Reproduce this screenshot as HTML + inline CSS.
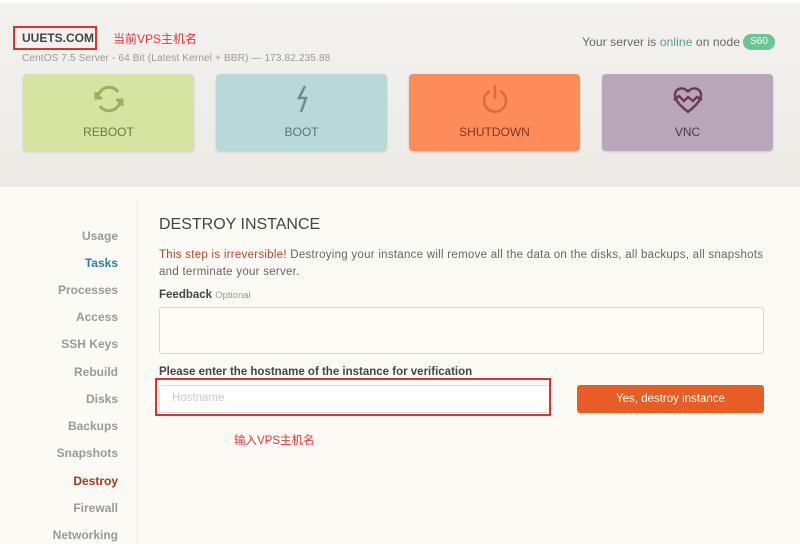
<!DOCTYPE html>
<html><head><meta charset="utf-8"><style>
*{margin:0;padding:0;box-sizing:border-box}
body{width:800px;height:544px;overflow:hidden;font-family:"Liberation Sans","Noto Sans CJK SC",sans-serif;background:#fcfaf4;position:relative;color:#555}
.hdr{position:absolute;left:0;top:0;width:800px;height:187px;background:linear-gradient(#f3f2ef,#eceae5);border-top:3px solid #fff}
.a{position:absolute;white-space:nowrap}
.btn{position:absolute;top:74px;width:171px;height:77px;border-radius:4px;box-shadow:0 1px 2px rgba(0,0,0,.15);text-align:center;font-size:12px}
.btn span{position:absolute;left:0;right:0;top:51px}
.btn svg{position:absolute;left:70px;top:9px}
.nav{position:absolute;right:682px;font-size:12px;color:#999;text-align:right;font-weight:bold}
</style></head><body>
<div class="hdr"></div>
<div class="a" style="left:13px;top:26px;width:84px;height:24px;border:2px solid #e03030"></div>
<div class="a" style="left:22px;top:31px;font-size:12px;font-weight:bold;color:#444">UUETS.COM</div>
<div class="a" style="left:113px;top:30px;font-size:12px;color:#e8383a">当前VPS主机名</div>
<div class="a" style="left:22px;top:53px;font-size:10px;color:#999;letter-spacing:0.15px">CentOS 7.5 Server - 64 Bit (Latest Kernel + BBR) — 173.82.235.88</div>
<div class="a" style="right:60px;top:35px;font-size:12px;color:#666;letter-spacing:0.1px">Your server is <span style="color:#4aa38a">online</span> on node</div>
<div class="a" style="left:743px;top:34px;width:32px;height:16px;border-radius:8px;background:#6cc396;color:#fff;font-size:10px;text-align:center;line-height:16px">S60</div>

<div class="btn" style="left:23px;background:#d5e4a0;color:#6b7a45"><svg width="32" height="32" viewBox="0 0 32 32" fill="none" stroke="#98b25a" stroke-width="3"><path d="M5 14a11 11 0 0 1 20-5"/><path d="M27 18a11 11 0 0 1-20 5"/><path d="M3 9v6h6M29 23v-6h-6"/></svg><span>REBOOT</span></div>
<div class="btn" style="left:216px;background:#b8d9d7;color:#5b7273"><svg width="32" height="32" viewBox="0 0 32 32" fill="none" stroke="#6d8c8c" stroke-width="2.5"><path d="M19 3l-6 12h7l-5 14"/></svg><span>BOOT</span></div>
<div class="btn" style="left:409px;background:#fe8c5a;color:#7a3a22"><svg width="32" height="32" viewBox="0 0 32 32" fill="none" stroke="#de6a3a" stroke-width="2.5"><path d="M11 8a11 11 0 1 0 10 0"/><path d="M16 2v14"/></svg><span>SHUTDOWN</span></div>
<div class="btn" style="left:602px;background:#b8a7b9;color:#4a3a4a"><svg width="32" height="32" viewBox="0 0 32 32" fill="none" stroke="#6a3b55" stroke-width="2.5"><path d="M16 9c-4-6-13-4-13 3 0 6 6 11 13 17 7-6 13-11 13-17 0-7-9-9-13-3"/><path d="M2 17l5-4 5 5 4-4 5 4 4-4 5 3"/></svg><span>VNC</span></div>

<div class="a" style="left:137px;top:200px;width:1px;height:344px;background:#efece4"></div>
<div class="nav" style="top:229px">Usage</div>
<div class="nav" style="top:256px;color:#2f7ea3">Tasks</div>
<div class="nav" style="top:283px">Processes</div>
<div class="nav" style="top:310px">Access</div>
<div class="nav" style="top:337px">SSH Keys</div>
<div class="nav" style="top:365px">Rebuild</div>
<div class="nav" style="top:392px">Disks</div>
<div class="nav" style="top:419px">Backups</div>
<div class="nav" style="top:446px">Snapshots</div>
<div class="nav" style="top:474px;color:#b0351c">Destroy</div>
<div class="nav" style="top:501px">Firewall</div>
<div class="nav" style="top:528px">Networking</div>

<div class="a" style="left:159px;top:216px;font-size:16px;color:#444">DESTROY INSTANCE</div>
<div class="a" style="left:159px;top:247px;font-size:11.5px;color:#666;line-height:17px;letter-spacing:0.27px"><span style="color:#b7472a">This step is irreversible!</span> Destroying your instance will remove all the data on the disks, all backups, all snapshots<br>and terminate your server.</div>
<div class="a" style="left:159px;top:289px;font-size:11.5px;font-weight:bold;color:#444">Feedback <span style="font-size:9.5px;color:#999;font-weight:normal">Optional</span></div>
<div class="a" style="left:159px;top:307px;width:605px;height:47px;border:1px solid #d8d6d0;border-radius:3px;background:#fdfbf5"></div>
<div class="a" style="left:159px;top:366px;font-size:11.5px;font-weight:bold;color:#444">Please enter the hostname of the instance for verification</div>
<div class="a" style="left:159px;top:385px;width:392px;height:28px;border:1px solid #ddd;border-radius:3px;background:#fff"></div>
<div class="a" style="left:155px;top:378px;width:396px;height:38px;border:2px solid #e03030"></div>
<div class="a" style="left:172px;top:392px;font-size:11.5px;color:#ccc">Hostname</div>
<div class="a" style="left:577px;top:385px;width:187px;height:28px;border-radius:3px;background:#e85c26;color:#fff;font-size:11.5px;text-align:center;line-height:28px">Yes, destroy instance</div>
<div class="a" style="left:234px;top:432px;font-size:11.5px;color:#e8383a">输入VPS主机名</div>
</body></html>
